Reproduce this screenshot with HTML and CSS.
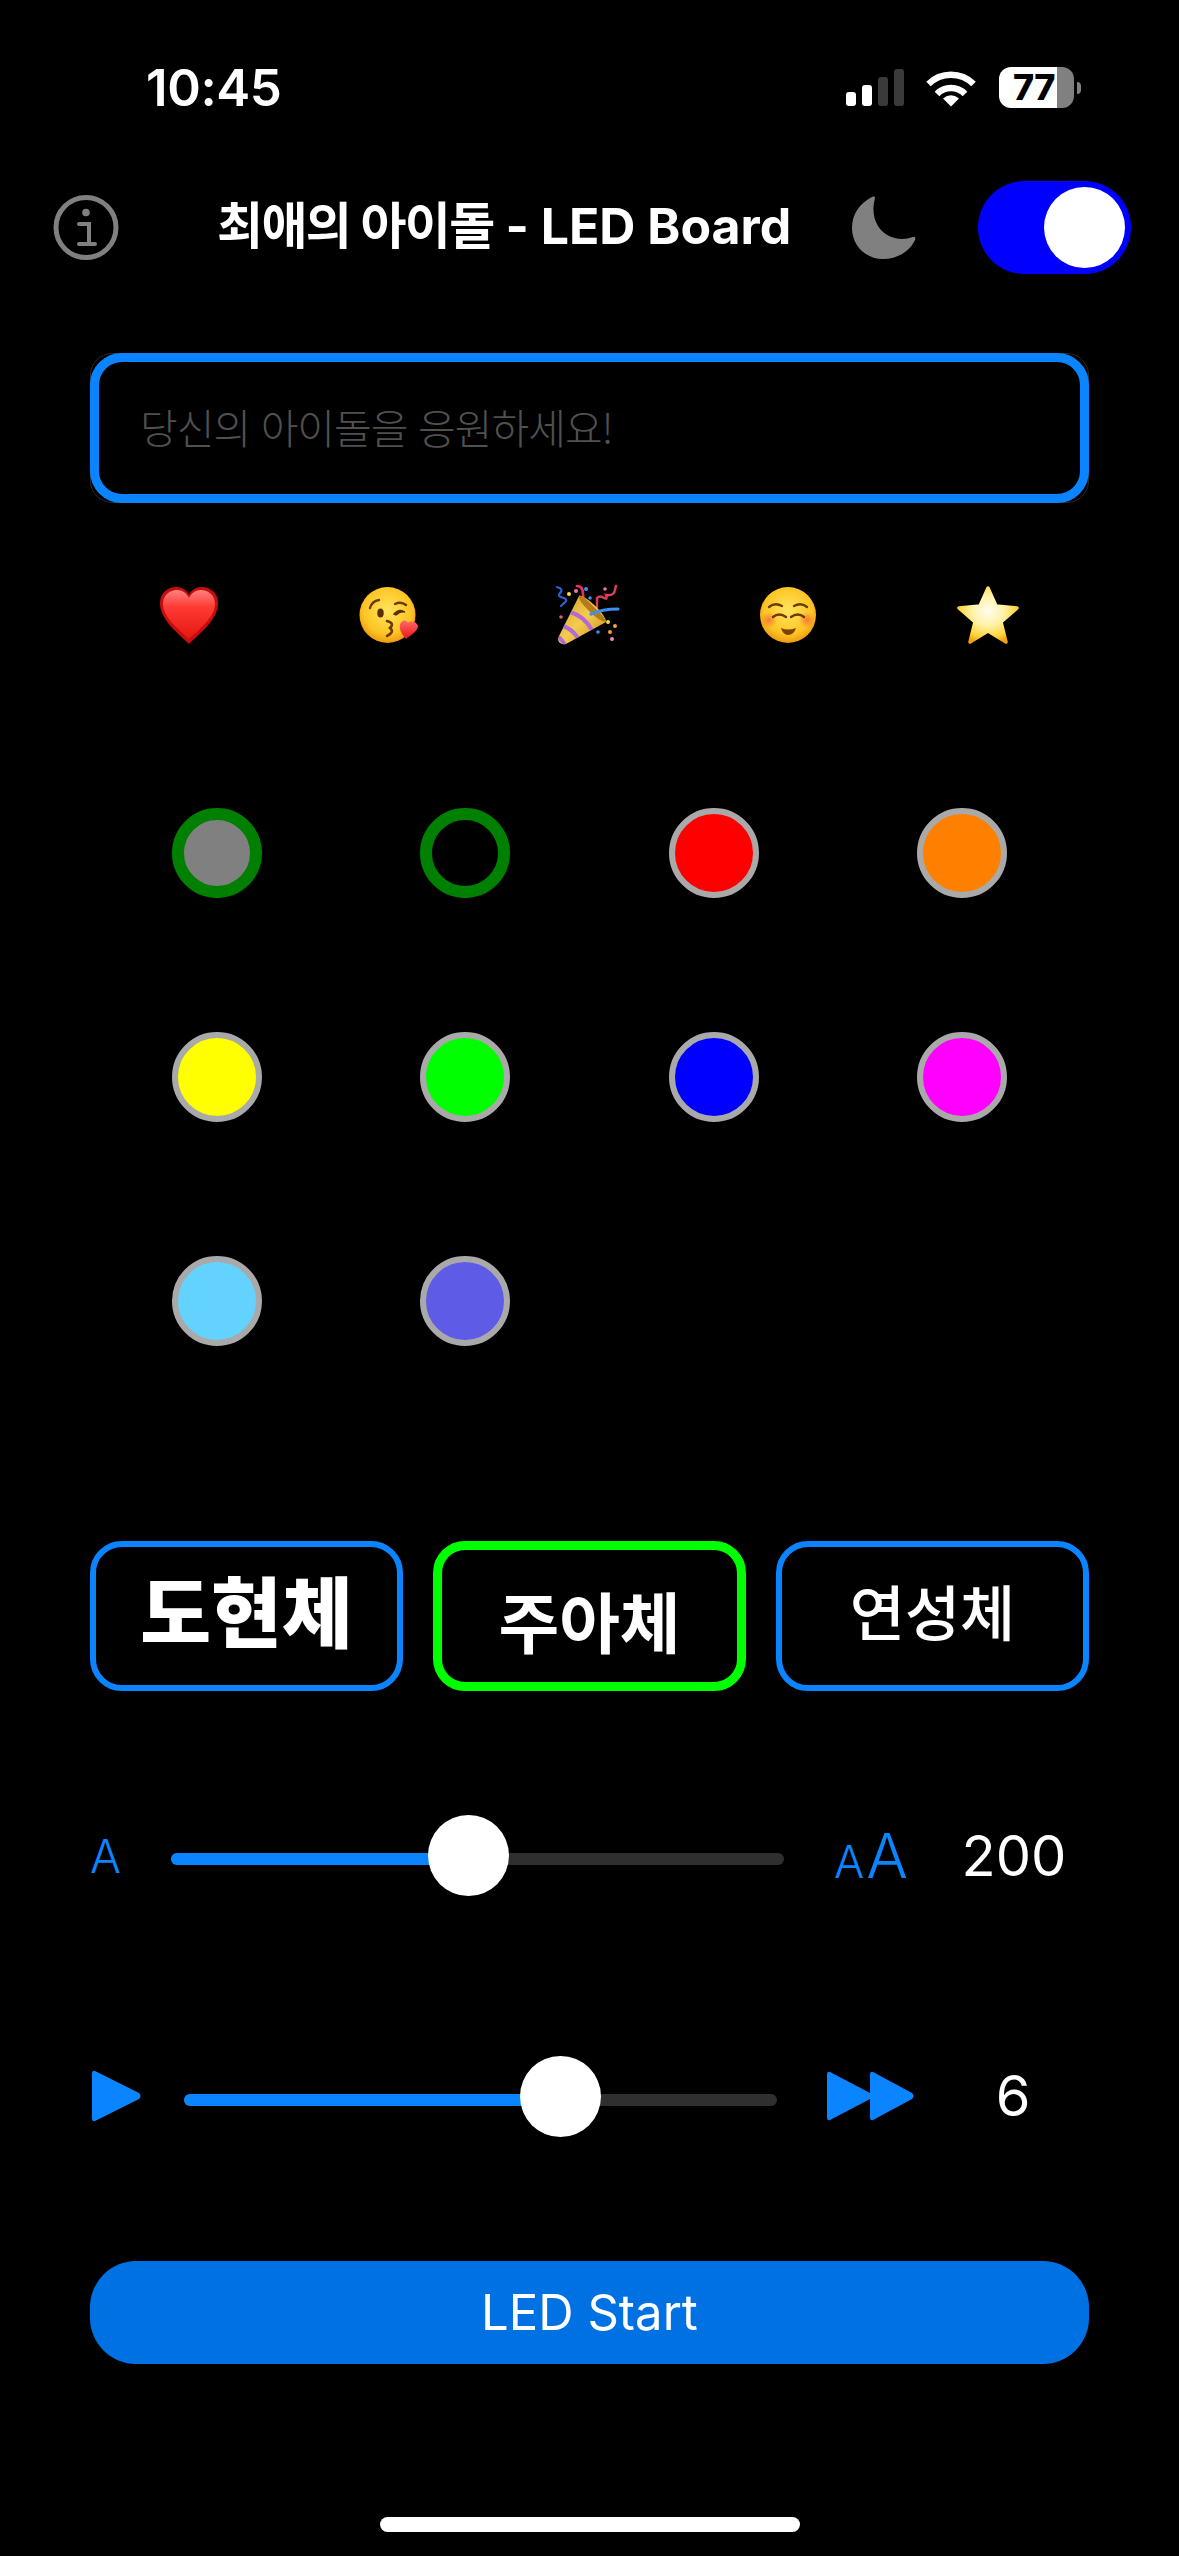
FILE: index.html
```html
<!DOCTYPE html>
<html lang="ko">
<head>
<meta charset="utf-8">
<title>최애의 아이돌 - LED Board</title>
<link rel="stylesheet" href="styles.css">
</head>
<body>
<div class="screen">
  <div class="status">
    <div class="time">10:45</div>
    <div class="status-icons">
      <div class="signal">
        <span class="bar bar1"></span><span class="bar bar2"></span><span class="bar bar3"></span><span class="bar bar4"></span>
      </div>
      <svg class="wifi" width="52" height="38" viewBox="0 0 52 38">
        <path d="M3.5 15 A32 32 0 0 1 48.5 15" fill="none" stroke="#fff" stroke-width="6.5"/>
        <path d="M12 25 A19.5 19.5 0 0 1 40 25" fill="none" stroke="#fff" stroke-width="6.5"/>
        <path d="M26 37.5 L18 29.5 Q26 23 34 29.5 Z" fill="#fff"/>
      </svg>
      <div class="battery"><span class="battery-num">77</span></div>
      <span class="nub"></span>
    </div>
  </div>

  <div class="header">
    <svg class="info" width="66" height="67" viewBox="0 0 66 67">
      <circle cx="33" cy="33.5" r="30" fill="none" stroke="#808080" stroke-width="5"/>
      <circle cx="33" cy="18.5" r="3.8" fill="#808080"/>
      <path d="M26 30 H36 V49.5 M26 50 H42" fill="none" stroke="#808080" stroke-width="4" stroke-linecap="round"/>
    </svg>
    <div class="title"><span class="title-ko">최애의 아이돌</span> - LED Board</div>
    <svg class="moon" width="64" height="64" viewBox="0 0 64 64">
      <path d="M23 2 C21 10 20 20 26 30 C33 41 47 46 61 41 C63 40 64 42 63 44 C58 55 46 63 31 63 C13 63 0 49 0 32 C0 18 8 7 20 1 C22 0 23 1 23 2 Z" fill="#808080"/>
    </svg>
    <div class="toggle"><span class="knob-toggle"></span></div>
  </div>

  <div class="input-frame">
    <div class="input-box"><span class="placeholder">당신의 아이돌을 응원하세요!</span></div>
  </div>

  <div class="emojis">
    <svg class="emoji" width="64" height="64" viewBox="0 0 64 64">
      <defs>
        <linearGradient id="hg" x1="0" y1="0" x2="0" y2="1">
          <stop offset="0" stop-color="#ff8080"/><stop offset=".35" stop-color="#ff3a34"/><stop offset="1" stop-color="#e81610"/>
        </linearGradient>
      </defs>
      <path d="M32 60 C22 50 3 36 3 19 C3 9 11 3 19 3 C25 3 30 6 32 11 C34 6 39 3 45 3 C53 3 61 9 61 19 C61 36 42 50 32 60 Z" fill="#c40f0c"/>
      <path d="M32 55 C24 47 6 34 6 20 C6 11 13 6 20 6 C25 6 30 9 32 14 C34 9 39 6 44 6 C51 6 58 11 58 20 C58 34 40 47 32 55 Z" fill="url(#hg)"/>
    </svg>
    <svg class="emoji" width="64" height="64" viewBox="0 0 64 64">
      <defs>
        <radialGradient id="fa" cx=".5" cy=".42" r=".6">
          <stop offset="0" stop-color="#ffe45c"/><stop offset=".7" stop-color="#fdc525"/><stop offset="1" stop-color="#ec940e"/>
        </radialGradient>
        <linearGradient id="sh" x1="0" y1="0" x2="0" y2="1">
          <stop offset="0" stop-color="#ff6a62"/><stop offset="1" stop-color="#e8161a"/>
        </linearGradient>
      </defs>
      <circle cx="30.5" cy="31" r="28" fill="url(#fa)"/>
      <path d="M13 24 Q15 17 22 16" fill="none" stroke="#6b3a05" stroke-width="2.4" stroke-linecap="round"/>
      <ellipse cx="23.5" cy="29" rx="3.2" ry="4.6" fill="#5a3000"/>
      <path d="M38 20 Q44 17 49 21" fill="none" stroke="#6b3a05" stroke-width="2.4" stroke-linecap="round"/>
      <path d="M37 30 Q42 24 48 28 Q43 27 39 31 Z" fill="#5a3000" stroke="#5a3000" stroke-width="1.4"/>
      <path d="M30 37 Q38 39 33 44 Q38 48 30 52" fill="none" stroke="#6b3a05" stroke-width="2.6" stroke-linecap="round"/>
      <path d="M49 55 C46 51 42 47 43 41 C44 36 49 35 51 39 C54 36 60 38 61 42 C61 47 54 51 49 55 Z" fill="url(#sh)"/>
    </svg>
    <svg class="emoji" width="64" height="64" viewBox="0 0 64 64">
      <defs>
        <linearGradient id="cn" x1="0" y1="0" x2="1" y2="1">
          <stop offset="0" stop-color="#d39a25"/><stop offset=".5" stop-color="#f4cc50"/><stop offset="1" stop-color="#c78d1d"/>
        </linearGradient>
        <clipPath id="cc"><path d="M4 59 Q1 57 3 52 L23 12 C28 10 50 30 50 38 L10 60 Q7 61 4 59 Z"/></clipPath>
      </defs>
      <path d="M1 3 Q8 5 4 9 Q1 13 8 14 Q13 16 7 20 L5 22" fill="none" stroke="#2f5fd0" stroke-width="2.2" stroke-linecap="round"/>
      <path d="M21 2 Q27 2 27 10 L28 24" fill="none" stroke="#ee2f63" stroke-width="2.6" stroke-linecap="round"/>
      <path d="M41 23 L41 14 Q44 11 48 14 Q52 16 50 11 Q55 12 58 9 L60 2" fill="none" stroke="#e33a5e" stroke-width="2.4" stroke-linecap="round"/>
      <path d="M4 59 Q1 57 3 52 L23 12 C28 10 50 30 50 38 L10 60 Q7 61 4 59 Z" fill="url(#cn)"/>
      <g clip-path="url(#cc)" stroke="#b36ad6" stroke-width="4" fill="none">
        <path d="M14 28 Q28 32 36 46"/>
        <path d="M7 42 Q16 45 22 54"/>
        <path d="M2 53 Q7 56 9 62"/>
      </g>
      <path d="M23 12 C24 10 30 15 37 22 C44 29 50 35 50 38 C46 38 40 34 33 27 C27 21 22 15 23 12 Z" fill="#b57d18"/>
      <path d="M35 30 Q46 25 62 25" fill="none" stroke="#3f8ff0" stroke-width="3.2" stroke-linecap="round"/>
      <circle cx="13" cy="10" r="2" fill="#f7dc4b"/><circle cx="20" cy="7" r="2" fill="#ef78a8"/><circle cx="30" cy="5" r="2" fill="#3f8ff0"/>
      <circle cx="34" cy="14" r="1.8" fill="#3f8ff0"/><circle cx="49" cy="5" r="1.8" fill="#ef78a8"/><circle cx="5" cy="33" r="1.8" fill="#e85a70"/>
      <circle cx="52" cy="38" r="2" fill="#f7dc4b"/><circle cx="59" cy="42" r="2" fill="#f3a23a"/><circle cx="54" cy="48" r="2" fill="#f3a23a"/>
      <circle cx="42" cy="48" r="1.8" fill="#3f8ff0"/><circle cx="56" cy="55" r="2" fill="#f08ab8"/>
    </svg>
    <svg class="emoji" width="64" height="64" viewBox="0 0 64 64">
      <defs>
        <radialGradient id="fb" cx=".5" cy=".42" r=".6">
          <stop offset="0" stop-color="#ffe45c"/><stop offset=".7" stop-color="#fdc525"/><stop offset="1" stop-color="#ec940e"/>
        </radialGradient>
        <radialGradient id="bl"><stop offset="0" stop-color="#f2603a" stop-opacity=".75"/><stop offset="1" stop-color="#f2603a" stop-opacity="0"/></radialGradient>
      </defs>
      <circle cx="32" cy="31" r="28" fill="url(#fb)"/>
      <circle cx="13" cy="36" r="8" fill="url(#bl)"/><circle cx="51" cy="36" r="8" fill="url(#bl)"/>
      <path d="M13 23 Q19 18 26 22 M38 22 Q45 18 51 23 M17 33 Q23 28 30 33 M35 33 Q42 28 48 33" fill="none" stroke="#6b3a05" stroke-width="2.4" stroke-linecap="round"/>
      <path d="M25 44 Q32 47 40 44 Q38 51 32 51 Q27 51 25 44 Z" fill="#7a4205"/>
    </svg>
    <svg class="emoji" width="64" height="64" viewBox="0 0 64 64">
      <defs>
        <radialGradient id="st" cx=".5" cy=".42" r=".62">
          <stop offset="0" stop-color="#fffdf0"/><stop offset=".45" stop-color="#fff2a8"/><stop offset=".8" stop-color="#ffd53a"/><stop offset="1" stop-color="#ee9f14"/>
        </radialGradient>
      </defs>
      <path d="M32 4 L40 22 L61 24 L45 38 L50 58 L32 47 L14 58 L19 38 L3 24 L24 22 Z" fill="url(#st)" stroke="url(#st)" stroke-width="3.5" stroke-linejoin="round"/>
    </svg>
  </div>

  <div class="swatches">
    <div class="cell"><span class="dot dot-selected dot-gray"></span></div>
    <div class="cell"><span class="dot dot-selected dot-black"></span></div>
    <div class="cell"><span class="dot dot-red"></span></div>
    <div class="cell"><span class="dot dot-orange"></span></div>
    <div class="cell"><span class="dot dot-yellow"></span></div>
    <div class="cell"><span class="dot dot-lime"></span></div>
    <div class="cell"><span class="dot dot-blue"></span></div>
    <div class="cell"><span class="dot dot-magenta"></span></div>
    <div class="cell"><span class="dot dot-cyan"></span></div>
    <div class="cell"><span class="dot dot-indigo"></span></div>
  </div>

  <div class="fonts">
    <div class="font-btn"><span class="face-do">도현체</span></div>
    <div class="font-btn font-btn-on"><span class="face-ju">주아체</span></div>
    <div class="font-btn"><span class="face-yeon">연성체</span></div>
  </div>

  <div class="slider size-slider">
    <div class="lead-a">A</div>
    <div class="track track-size">
      <span class="fill" style="width:48.6%"></span>
      <span class="thumb" style="left:48.6%"></span>
    </div>
    <div class="trail-aa"><span class="a-small">A</span><span class="a-large">A</span></div>
    <div class="value value-size">200</div>
  </div>

  <div class="slider speed-slider">
    <svg class="play" width="50" height="56" viewBox="0 0 50 56">
      <path d="M3 3 L47 25 Q50 28 47 31 L3 53 Q0 54 0 50 L0 6 Q0 2 3 3 Z" fill="#0a84ff"/>
    </svg>
    <div class="track track-speed">
      <span class="fill" style="width:63.5%"></span>
      <span class="thumb" style="left:63.5%"></span>
    </div>
    <svg class="ffwd" width="88" height="52" viewBox="0 0 88 52">
      <path d="M3 2 L43 23 Q46 26 43 29 L3 50 Q0 51 0 47 L0 5 Q0 1 3 2 Z" fill="#0a84ff"/>
      <path d="M46 2 L85 23 Q88 26 85 29 L46 50 Q43 51 43 47 L43 5 Q43 1 46 2 Z" fill="#0a84ff"/>
    </svg>
    <div class="value value-speed">6</div>
  </div>

  <div class="start">LED Start</div>
  <div class="home"></div>
</div>
</body>
</html>
```
FILE: styles.css
```css
* { box-sizing: border-box; }
html, body { margin: 0; padding: 0; background: #000; }
body { font-family: "Inter", "Noto Sans CJK KR", sans-serif; color: #fff; }
.screen { width: 1179px; height: 2556px; overflow: hidden; background: #000; display: flex; flex-direction: column; }

/* status bar */
.status { height: 181px; display: flex; align-items: flex-start; justify-content: space-between; padding: 61px 98px 0 146px; }
.time { font-size: 51px; font-weight: 600; line-height: 54px; letter-spacing: -0.4px; }
.status-icons { display: flex; align-items: flex-start; padding-top: 6px; }
.signal { display: flex; align-items: flex-end; gap: 6px; height: 37px; margin-top: 2px; margin-right: 21px; }
.bar { display: block; width: 10px; border-radius: 3px; background: #fff; }
.bar1 { height: 14px; }
.bar2 { height: 21px; }
.bar3 { height: 29px; background: #3a3a3a; }
.bar4 { height: 37px; background: #3a3a3a; }
.wifi { display: block; margin-top: 2px; margin-right: 22px; }
.battery { width: 75px; height: 41px; border-radius: 12px; background: linear-gradient(to right, #fff 77%, #808080 77%); color: #000; font-size: 36px; font-weight: 800; line-height: 41px; padding-left: 14px; letter-spacing: -0.5px; }
.battery-num { display: block; }
.nub { display: block; width: 4px; height: 12px; margin: 15px 0 0 3px; border-radius: 0 6px 6px 0; background: #808080; }

/* header */
.header { height: 93px; display: flex; align-items: center; }
.info { display: block; margin-left: 53px; flex: none; }
.title { flex: 1; margin-left: 98px; font-size: 50px; font-weight: 700; line-height: 91px; white-space: nowrap; padding-bottom: 2px; }
.title-ko { letter-spacing: -1.6px; }
.moon { display: block; flex: none; margin-right: 62px; }
.toggle { width: 153px; height: 93px; flex: none; margin-right: 48px; border-radius: 47px; background: #0000ff; display: flex; align-items: center; justify-content: flex-end; padding-right: 6px; }
.knob-toggle { display: block; width: 81px; height: 81px; border-radius: 50%; background: #fff; }

/* input */
.input-frame { margin: 79px 90px 0; height: 150px; border-radius: 22px; border: 1px solid #2a2a2a; flex: none; }
.input-box { margin: -1px; height: 150px; border: 9px solid #0a84ff; border-radius: 32px; display: flex; align-items: center; padding-left: 41px; padding-bottom: 5px; }
.placeholder { font-family: "Noto Sans CJK KR", sans-serif; font-weight: 300; font-size: 41px; line-height: 50px; color: #505050; letter-spacing: -1px; white-space: nowrap; }

/* emoji row */
.emojis { margin: 81px 0 0 89px; width: 999px; height: 64px; display: grid; grid-template-columns: repeat(5, 1fr); justify-items: center; flex: none; }
.emoji { display: block; }

/* color swatches */
.swatches { margin: 160px 0 0 93px; width: 993px; display: grid; grid-template-columns: repeat(4, 1fr); row-gap: 134px; flex: none; }
.cell { display: flex; justify-content: center; }
.dot { display: block; width: 90px; height: 90px; border-radius: 50%; border: 6px solid #a9a9a9; }
.dot-selected { border: 12px solid #008000; }
.dot-gray { background: #808080; }
.dot-black { background: #000; }
.dot-red { background: #ff0000; }
.dot-orange { background: #ff8000; }
.dot-yellow { background: #ffff00; }
.dot-lime { background: #00ff00; }
.dot-blue { background: #0000ff; }
.dot-magenta { background: #ff00ff; }
.dot-cyan { background: #64d2ff; }
.dot-indigo { background: #5e5ce6; }

/* font buttons */
.fonts { margin: 195px 90px 0; display: grid; grid-template-columns: repeat(3, 313px); column-gap: 30px; flex: none; }
.font-btn { height: 150px; border: 6px solid #0a84ff; border-radius: 32px; display: flex; align-items: center; justify-content: center; font-family: "Noto Sans CJK KR", sans-serif; white-space: nowrap; }
.font-btn-on { border: 9px solid #00ff00; }
.face-do { font-size: 77px; font-weight: 900; line-height: 80px; margin-top: -14px; }
.face-ju { font-size: 66px; font-weight: 700; line-height: 70px; margin-top: 6px; }
.face-yeon { font-size: 60px; font-weight: 500; line-height: 70px; margin-top: -12px; }

/* sliders */
.slider { margin-left: 90px; width: 999px; height: 81px; display: flex; align-items: center; flex: none; position: relative; }
.size-slider { margin-top: 124px; }
.speed-slider { margin-top: 159px; }
.track { position: relative; height: 12px; border-radius: 6px; background: #2f2f2f; margin-top: 7px; flex: none; }
.track-size { width: 613px; }
.track-speed { width: 593px; margin-top: 9px; }
.fill { display: block; height: 12px; border-radius: 6px; background: #0a84ff; }
.thumb { position: absolute; top: -38px; width: 81px; height: 81px; margin-left: -40.5px; border-radius: 50%; background: #fff; }
.lead-a { width: 81px; flex: none; color: #0a84ff; font-size: 46px; font-weight: 300; line-height: 56px; }
.trail-aa { margin-left: 50px; width: 131px; flex: none; color: #0a84ff; font-weight: 300; display: flex; align-items: baseline; margin-top: 7px; line-height: 60px; letter-spacing: -1px; }
.a-small { font-size: 45px; }
.a-large { font-size: 62px; margin-left: 3px; }
.value { font-size: 56px; font-weight: 400; line-height: 60px; width: 120px; text-align: center; flex: none; }
.value-size { margin-top: 1px; margin-left: -11px; }
.play { display: block; flex: none; margin: 0 42px 0 2px; }
.ffwd { display: block; flex: none; margin: 0 0 0 50px; }
.value-speed { margin-left: 38px; margin-top: 0; }

/* primary action */
.start { margin: 125px 90px 0; height: 103px; border-radius: 46px; background: #0071e3; display: flex; align-items: center; justify-content: center; font-size: 49px; font-weight: 400; flex: none; }
.home { margin: 153px auto 0; width: 420px; height: 15px; border-radius: 8px; background: #fff; flex: none; }
```
